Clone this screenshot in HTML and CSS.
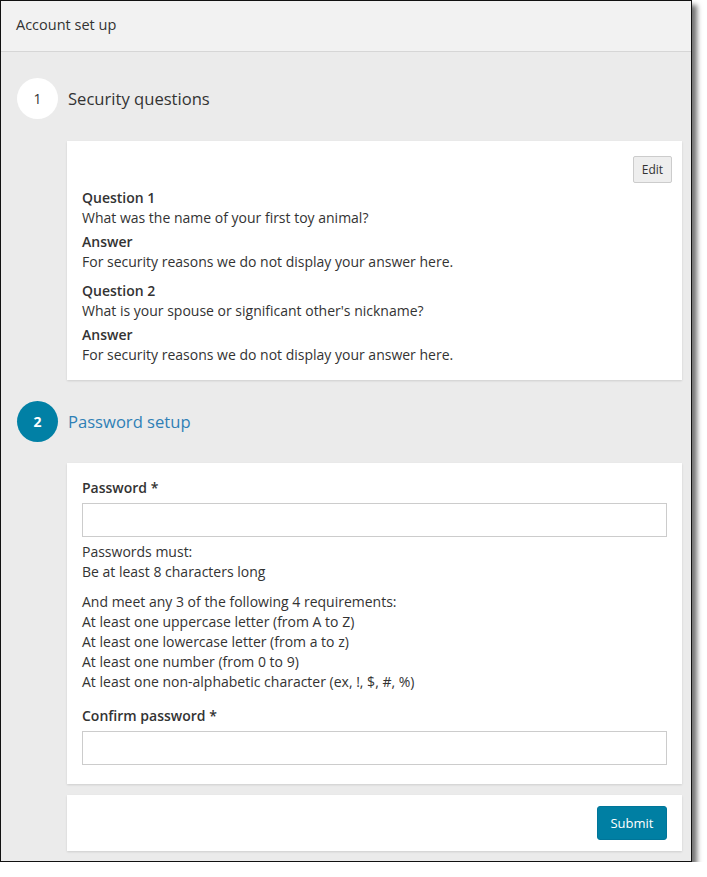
FILE: index.html
```html
<!DOCTYPE html>
<html lang="en">
<head>
<meta charset="utf-8">
<title>Account set up</title>
<link rel="stylesheet" href="styles.css">
</head>
<body>
<div class="frame">
  <header class="topbar">Account set up</header>
  <main class="content">
    <section class="step">
      <div class="step-head">
        <span class="badge">1</span>
        <h2 class="step-title">Security questions</h2>
      </div>
      <div class="card card-questions">
        <div class="edit-row"><button class="btn-edit" type="button">Edit</button></div>
        <div class="qa">
          <div class="label">Question 1</div>
          <div class="text">What was the name of your first toy animal?</div>
          <div class="label answer">Answer</div>
          <div class="text">For security reasons we do not display your answer here.</div>
        </div>
        <div class="qa qa-next">
          <div class="label">Question 2</div>
          <div class="text">What is your spouse or significant other's nickname?</div>
          <div class="label answer">Answer</div>
          <div class="text">For security reasons we do not display your answer here.</div>
        </div>
      </div>
    </section>
    <section class="step step-active">
      <div class="step-head">
        <span class="badge badge-active">2</span>
        <h2 class="step-title title-active">Password setup</h2>
      </div>
      <div class="card card-form">
        <label class="label" for="pw">Password *</label>
        <input class="field" id="pw" type="password">
        <div class="rules">
          <div class="text">Passwords must:</div>
          <div class="text">Be at least 8 characters long</div>
        </div>
        <div class="rules rules-next">
          <div class="text">And meet any 3 of the following 4 requirements:</div>
          <div class="text">At least one uppercase letter (from A to Z)</div>
          <div class="text">At least one lowercase letter (from a to z)</div>
          <div class="text">At least one number (from 0 to 9)</div>
          <div class="text">At least one non-alphabetic character (ex, !, $, #, %)</div>
        </div>
        <label class="label label-confirm" for="pw2">Confirm password *</label>
        <input class="field" id="pw2" type="password">
      </div>
      <div class="card card-actions">
        <button class="btn-submit" type="button">Submit</button>
      </div>
    </section>
  </main>
</div>
</body>
</html>
```

FILE: styles.css
```css
* { box-sizing: border-box; }
html, body { margin: 0; padding: 0; background: #ffffff; }
body {
  font-family: "Open Sans", "Noto Sans", sans-serif;
  font-size: 14px;
  line-height: 20px;
  color: #333333;
}
.frame {
  width: 692px;
  height: 862px;
  border: 1px solid #111111;
  background: #ebebeb;
  box-shadow: 5px 5px 5px rgba(0, 0, 0, 0.55);
  display: flex;
  flex-direction: column;
  overflow: hidden;
}
.topbar {
  height: 51px;
  background: #f2f2f2;
  border-bottom: 1px solid #d6d6d6;
  padding: 0 15px 3px 15px;
  display: flex;
  align-items: center;
  font-size: 14.5px;
  color: #333333;
}
.content {
  padding: 26px 9px 0 16px;
}
.step-head {
  display: flex;
  align-items: center;
  gap: 10px;
}
.badge {
  width: 41px;
  height: 41px;
  border-radius: 50%;
  background: #ffffff;
  display: flex;
  align-items: center;
  justify-content: center;
  font-size: 14px;
  color: #333333;
}
.badge-active {
  background: #0180a5;
  color: #ffffff;
  font-weight: 700;
}
.step-title {
  margin: 0;
  font-size: 16.6px;
  font-weight: 400;
  color: #333333;
}
.title-active { color: #2f80b6; }
.card {
  background: #ffffff;
  margin-left: 50px;
  box-shadow: 0 1px 2px rgba(0, 0, 0, 0.12);
}
.card-questions {
  margin-top: 22px;
  padding: 15px;
}
.edit-row {
  display: flex;
  justify-content: flex-end;
  margin-right: -5px;
  margin-bottom: 5px;
}
.btn-edit {
  height: 27px;
  width: 39px;
  padding: 0;
  font-family: inherit;
  font-size: 12px;
  color: #333333;
  background: #eeeeee;
  border: 1px solid #cccccc;
  border-radius: 2px;
}
.label {
  display: block;
  font-weight: 600;
  color: #333333;
}
.answer { margin-top: 4px; }
.qa-next { margin-top: 9px; }
.step-active { margin-top: 21px; }
.card-form {
  margin-top: 21px;
  padding: 15px 15px 19px 15px;
}
.field {
  display: block;
  width: 100%;
  height: 34px;
  margin-top: 5px;
  border: 1px solid #cccccc;
  border-radius: 0;
  background: #ffffff;
  font-family: inherit;
}
.rules { margin-top: 5px; }
.rules-next { margin-top: 10px; }
.label-confirm { margin-top: 14px; }
.card-actions {
  margin-top: 11px;
  padding: 11px 15px;
  display: flex;
  justify-content: flex-end;
}
.btn-submit {
  height: 34px;
  width: 70px;
  padding: 0;
  font-family: inherit;
  font-size: 13px;
  color: #ffffff;
  background: #007fa3;
  border: 1px solid #007599;
  border-radius: 3px;
}
```
